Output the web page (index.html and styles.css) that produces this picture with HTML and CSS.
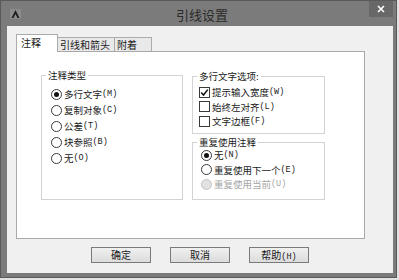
FILE: index.html
```html
<!DOCTYPE html>
<html lang="zh-CN">
<head>
<meta charset="UTF-8" />
<title>引线设置</title>
<link rel="stylesheet" href="styles.css">
</head>
<body>
  <div class="window">
    <div class="titlebar">
      <svg class="app-icon" width="11" height="10" viewBox="0 0 11 10">
        <rect width="11" height="10" fill="#8c8c8c"/>
        <polygon points="5.5,1 9.5,9 7.5,9 5.5,5 3.5,9 1.5,9" fill="#1e1e1e"/>
      </svg>
      <div class="title">引线设置</div>
      <div class="close-btn">
        <svg width="8" height="8" viewBox="0 0 8 8">
          <path d="M1 1 L7 7 M7 1 L1 7" stroke="#fff" stroke-width="1.6"/>
        </svg>
      </div>
    </div>

    <div class="client">
      <div class="tabs">
        <div class="tab active">注释</div>
        <div class="tab tab-leader">引线和箭头</div>
        <div class="tab tab-attach">附着</div>
      </div>

      <div class="panel">
        <div class="group group-type">
          <div class="group-title">注释类型</div>
          <div class="options">
            <div class="option"><span class="radio checked"></span>多行文字<span class="key">(M)</span></div>
            <div class="option"><span class="radio"></span>复制对象<span class="key">(C)</span></div>
            <div class="option"><span class="radio"></span>公差<span class="key">(T)</span></div>
            <div class="option"><span class="radio"></span>块参照<span class="key">(B)</span></div>
            <div class="option"><span class="radio"></span>无<span class="key">(O)</span></div>
          </div>
        </div>

        <div class="side">
          <div class="group group-mtext">
            <div class="group-title">多行文字选项:</div>
            <div class="options">
              <div class="option">
                <span class="check checked">
                  <svg width="9" height="9" viewBox="0 0 9 9"><path d="M1.2 4.6 L3.5 7 L7.8 1.6" fill="none" stroke="#111" stroke-width="1.5"/></svg>
                </span>提示输入宽度<span class="key">(W)</span>
              </div>
              <div class="option"><span class="check"></span>始终左对齐<span class="key">(L)</span></div>
              <div class="option"><span class="check"></span>文字边框<span class="key">(F)</span></div>
            </div>
          </div>

          <div class="group group-reuse">
            <div class="group-title">重复使用注释</div>
            <div class="options">
              <div class="option"><span class="radio checked"></span>无<span class="key">(N)</span></div>
              <div class="option"><span class="radio"></span>重复使用下一个<span class="key">(E)</span></div>
              <div class="option disabled"><span class="radio"></span>重复使用当前<span class="key">(U)</span></div>
            </div>
          </div>
        </div>
      </div>

      <div class="buttons">
        <button class="btn">确定</button>
        <button class="btn">取消</button>
        <button class="btn">帮助<span class="key">(H)</span></button>
      </div>
    </div>
  </div>
</body>
</html>
```

FILE: styles.css
```css
* {
  box-sizing: border-box;
}

body {
  margin: 0;
  background: #e2e2e2;
  font-family: "Noto Sans CJK SC", "Noto Sans", sans-serif;
  font-size: 9.5px;
  color: #1a1a1a;
}

.window {
  width: 397px;
  height: 278px;
  background: #7b7b7b;
  border: 1px solid #5a5a5a;
  padding: 0 3px 4px 6px;
  display: flex;
  flex-direction: column;
}

/* Title bar */
.titlebar {
  height: 25px;
  display: flex;
  align-items: flex-start;
}

.app-icon {
  margin: 8px 0 0 3px;
  flex: none;
}

.title {
  flex: 1;
  text-align: center;
  padding-left: 14px;
  font-size: 13px;
  line-height: 15px;
  margin-top: 6px;
  color: #2a2a2a;
}

.close-btn {
  width: 24px;
  height: 16px;
  background: #686868;
  display: flex;
  align-items: center;
  justify-content: center;
}

/* Client area */
.client {
  flex: 1;
  background: #f0f0f0;
  padding: 8px 0 0 9px;
}

.tabs {
  display: flex;
  align-items: flex-start;
  height: 17px;
}

.tab {
  height: 14px;
  margin-top: 3px;
  border: 1px solid #ababab;
  border-bottom: none;
  background: #e9e9e9;
  font-size: 10px;
  line-height: 13px;
  padding-left: 2px;
  white-space: nowrap;
}

.tab.active {
  position: relative;
  z-index: 1;
  width: 42px;
  height: 18px;
  margin-top: 0;
  background: #fff;
  padding-left: 4px;
  line-height: 16px;
}

.tab-leader {
  width: 58px;
  margin-left: -1px;
}

.tab-attach {
  width: 38px;
  margin-left: -1px;
}

.panel {
  width: 349px;
  height: 188px;
  background: #fff;
  border: 1px solid #a9a9a9;
  display: flex;
  align-items: flex-start;
  gap: 9px;
  padding: 23px 0 0 24px;
}

/* Group boxes */
.group {
  border: 1px solid #d3d3d3;
}

.group-title {
  width: fit-content;
  height: 12px;
  background: #fff;
  margin: -7px 0 0 4px;
  padding: 0 2px;
  line-height: 12px;
}

.group-type {
  width: 142px;
  height: 125px;
}

.group-type .options {
  padding: 5px 0 0 9px;
}

.group-type .option {
  height: 16px;
}

.side {
  display: flex;
  flex-direction: column;
  gap: 8px;
  padding-top: 1px;
}

.group-mtext,
.group-reuse {
  width: 133px;
  height: 58px;
}

.group-mtext .options {
  padding: 3px 0 0 6px;
}

.group-reuse .options {
  padding: 0 0 0 8px;
}

.group-mtext .option,
.group-reuse .option {
  height: 14.5px;
}

.option {
  display: flex;
  align-items: center;
  white-space: nowrap;
}

.key {
  font-family: "Liberation Mono", monospace;
  font-size: 8.5px;
}

.option.disabled {
  color: #a5a5a5;
}

/* Radio and checkbox marks */
.radio {
  width: 11px;
  height: 11px;
  border: 1px solid #3a3a3a;
  border-radius: 50%;
  background: #fff;
  margin-right: 2px;
  display: flex;
  align-items: center;
  justify-content: center;
  flex: none;
}

.radio.checked::after {
  content: "";
  width: 5px;
  height: 5px;
  border-radius: 50%;
  background: #111;
}

.disabled .radio {
  border-color: #c4c4c4;
  background: #e2e2e2;
}

.check {
  width: 11px;
  height: 11px;
  border: 1px solid #3a3a3a;
  background: #fff;
  margin-right: 2px;
  display: flex;
  align-items: center;
  justify-content: center;
  flex: none;
}

/* Bottom buttons */
.buttons {
  display: flex;
  justify-content: center;
  gap: 19px;
  margin-top: 8px;
  padding-right: 9px;
}

.btn {
  width: 60px;
  height: 16px;
  padding: 0;
  border: 1px solid #7a7a7a;
  background: linear-gradient(#f0f0f0, #dcdcdc);
  font-family: "Noto Sans CJK SC", "Noto Sans", sans-serif;
  font-size: 10px;
  line-height: 14px;
  color: #1a1a1a;
}
```
